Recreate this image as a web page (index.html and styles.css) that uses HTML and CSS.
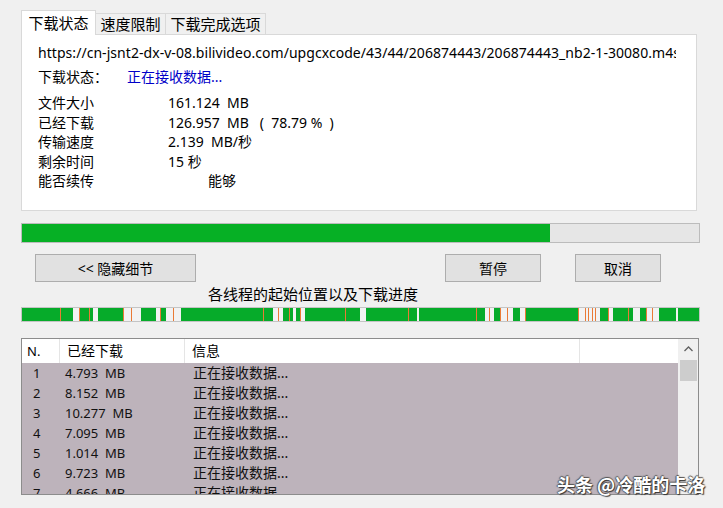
FILE: index.html
```html
<!DOCTYPE html>
<html lang="zh-CN">
<head>
    <meta charset="UTF-8">
    <title>下载状态</title>
    <link rel="stylesheet" href="styles.css">
</head>
<body>
    <div class="window">
        <!-- tabs -->
        <div class="tabs">
            <div class="tab active">下载状态</div>
            <div class="tab">速度限制</div>
            <div class="tab tab-wide">下载完成选项</div>
        </div>

        <div class="panel">
            <div class="url">https://cn-jsnt2-dx-v-08.bilivideo.com/upgcxcode/43/44/206874443/206874443_nb2-1-30080.m4s</div>
            <div class="status">
                <span class="status-label">下载状态：</span>
                <span class="status-value">正在接收数据...</span>
            </div>
            <div class="info">
                <span>文件大小</span><span class="val">161.124  MB</span>
                <span>已经下载</span><span class="val">126.957  MB   (  78.79 %  )</span>
                <span>传输速度</span><span class="val">2.139  MB/秒</span>
                <span>剩余时间</span><span class="val">15 秒</span>
                <span>能否续传</span><span class="val resume">能够</span>
            </div>
        </div>

        <div class="progress"><div class="progress-fill"></div></div>

        <div class="buttons">
            <button class="btn btn-hide">&lt;&lt; 隐藏细节</button>
            <button class="btn btn-pause">暂停</button>
            <button class="btn btn-cancel">取消</button>
        </div>

        <div class="threads-label">各线程的起始位置以及下载进度</div>
        <div class="threads" id="threads"></div>

        <!-- thread list -->
        <div class="list">
            <div class="list-main">
                <div class="list-head">
                    <span class="h-num">N.</span>
                    <span>已经下载</span>
                    <span>信息</span>
                    <span class="h-rest"></span>
                </div>
                <div class="rows">
                    <div class="row"><span class="num">1</span><span class="size">4.793  MB</span><span>正在接收数据...</span></div>
                    <div class="row"><span class="num">2</span><span class="size">8.152  MB</span><span>正在接收数据...</span></div>
                    <div class="row"><span class="num">3</span><span class="size">10.277  MB</span><span>正在接收数据...</span></div>
                    <div class="row"><span class="num">4</span><span class="size">7.095  MB</span><span>正在接收数据...</span></div>
                    <div class="row"><span class="num">5</span><span class="size">1.014  MB</span><span>正在接收数据...</span></div>
                    <div class="row"><span class="num">6</span><span class="size">9.723  MB</span><span>正在接收数据...</span></div>
                    <div class="row"><span class="num">7</span><span class="size">4.666  MB</span><span>正在接收数据...</span></div>
                </div>
            </div>
            <div class="scrollbar">
                <div class="scroll-up">
                    <svg width="9" height="6" viewBox="0 0 9 6"><polyline points="0.5,5 4.5,1 8.5,5" fill="none" stroke="#606060" stroke-width="1.3"/></svg>
                </div>
                <div class="scroll-thumb"></div>
            </div>
        </div>
    </div>

    <div class="watermark">头条 @冷酷的卡洛</div>

<script>
    // thread segments: type, start, end (px inside the bar)
    var segs = [
        ['g',0,38],['o',38,39],['g',39,51],['l',51,57],['o',57,58],['g',58,67],['o',67,68],['g',68,71],
        ['l',71,76],['g',76,101],['o',101,102],['l',102,109],['o',109,110],['l',110,119],['g',119,134],
        ['l',134,138],['o',138,139],['g',139,144],['l',144,151],['o',151,152],['l',152,159],['g',159,241],
        ['o',241,242],['g',242,251],['l',251,256],['o',256,257],['l',257,261],['g',261,267],['o',267,268],
        ['g',268,271],['l',271,274],['g',274,278],['o',278,279],['l',279,283],['g',283,323],['o',323,324],
        ['g',324,338],['l',338,344],['g',344,386],['o',386,387],['g',387,395],['l',395,397],['g',397,454],
        ['o',454,455],['g',455,463],['l',463,467],['o',467,468],['l',468,472],['g',472,478],['o',478,479],
        ['l',479,485],['o',485,486],['l',486,491],['g',491,498],['l',498,503],['o',503,504],['g',504,556],
        ['o',556,557],['l',557,563],['o',563,564],['l',564,566],['o',566,567],['l',567,570],['o',570,571],
        ['l',571,573],['o',573,574],['l',574,578],['g',578,586],['o',586,587],['l',587,591],['g',591,606],
        ['o',606,607],['g',607,611],['l',611,618],['g',618,624],['o',624,625],['l',625,630],['o',630,631],
        ['l',631,637],['g',637,654],['l',654,656],['g',656,677]
    ];
    var bar = document.getElementById('threads');
    segs.forEach(function(s) {
        var d = document.createElement('span');
        d.className = 'seg seg-' + s[0];
        d.style.width = (s[2] - s[1]) + 'px';
        bar.appendChild(d);
    });
</script>
</body>
</html>
```

FILE: styles.css
```css
body {
    margin: 0;
    background-color: #f0f0f0;
    color: #000;
    font-family: "Noto Sans", "Noto Sans CJK SC", sans-serif;
    font-size: 14px;
}
.window {
    width: 679px;
    padding: 10px 0 0 21px;
}
/* tabs */
.tabs {
    display: flex;
    align-items: flex-end;
    height: 24px;
}
.tab {
    box-sizing: border-box;
    width: 70px;
    height: 21px;
    border: 1px solid #d9d9d9;
    border-bottom: none;
    border-left: none;
    background-color: #f0f0f0;
    font-size: 15px;
    line-height: 20px;
    text-align: center;
}
.tab.active {
    width: 75px;
    height: 25px;
    margin-bottom: -1px;
    border-left: 1px solid #d9d9d9;
    background-color: #fff;
    line-height: 24px;
    position: relative;
    z-index: 1;
}
.tab-wide {
    width: 100px;
}
.panel {
    box-sizing: border-box;
    width: 676px;
    height: 177px;
    border: 1px solid #d9d9d9;
    background-color: #fff;
    padding: 8px 20px 0 16px;
}
.url {
    white-space: nowrap;
    overflow: hidden;
    line-height: 20px;
    letter-spacing: 0.05px;
}
.status {
    display: flex;
    margin-top: 4px;
    line-height: 20px;
}
.status-label {
    width: 89px;
}
.status-value {
    color: #0000c8;
}
.info {
    display: grid;
    grid-template-columns: 130px 1fr;
    margin-top: 6px;
    line-height: 19.5px;
}
.info span {
    white-space: pre;
}
.info .resume {
    padding-left: 40px;
}
/* main progress */
.progress {
    box-sizing: border-box;
    width: 679px;
    height: 20px;
    margin-top: 12px;
    border: 1px solid #bcbcbc;
    background-color: #e6e6e6;
}
.progress-fill {
    width: 78%;
    height: 100%;
    background-color: #06b025;
}
.buttons {
    display: flex;
    margin-top: 11px;
}
.btn {
    box-sizing: border-box;
    height: 28px;
    border: 1px solid #adadad;
    background-color: #e1e1e1;
    font-family: "Noto Sans", "Noto Sans CJK SC", sans-serif;
    font-size: 14px;
    color: #000;
    padding: 0;
}
.btn-hide {
    width: 161px;
    margin-left: 14px;
}
.btn-pause {
    width: 96px;
    margin-left: 249px;
}
.btn-cancel {
    width: 86px;
    margin-left: 34px;
}
.threads-label {
    margin: 2px 0 0 187px;
    font-size: 15px;
    line-height: 20px;
}
.threads {
    display: flex;
    box-sizing: border-box;
    width: 679px;
    height: 15px;
    margin-top: 3px;
    border: 1px solid #c4c4c4;
    background-color: #f2f2f2;
}
.seg {
    height: 100%;
    flex: none;
}
.seg-g { background-color: #06ab2a; }
.seg-l { background-color: #f2f2f2; }
.seg-o { background-color: #ea7a35; }
/* thread list */
.list {
    display: flex;
    box-sizing: border-box;
    width: 678px;
    height: 157px;
    margin-top: 16px;
    border: 1px solid #8c8c8c;
    background-color: #fff;
}
.list-main {
    width: 656px;
    overflow: hidden;
}
.list-head {
    display: grid;
    grid-template-columns: 38px 125px 395px 1fr;
    height: 24px;
    line-height: 24px;
    background-color: #fff;
}
.list-head span {
    border-right: 1px solid #e5e5e5;
    padding-left: 7px;
}
.list-head .h-num {
    padding-left: 5px;
    font-size: 13px;
}
.list-head .h-rest {
    border-right: none;
}
.rows {
    height: 131px;
    background-color: #bdb3bb;
    overflow: hidden;
}
.row {
    display: grid;
    grid-template-columns: 38px 125px 1fr;
    height: 20px;
    line-height: 20px;
    color: #111;
}
.row .num {
    padding-left: 11px;
    font-size: 13px;
}
.row .size {
    padding-left: 5px;
    font-size: 13px;
    white-space: pre;
}
.row span:last-child {
    padding-left: 8px;
}
.scrollbar {
    width: 20px;
    background-color: #f0f0f0;
}
.scroll-up {
    display: flex;
    justify-content: center;
    align-items: center;
    height: 20px;
}
.scroll-thumb {
    width: 17px;
    height: 21px;
    margin: 1px 0 0 2px;
    background-color: #cdcdcd;
}
/* watermark over the list */
.watermark {
    position: absolute;
    left: 557px;
    top: 471px;
    font-family: "Noto Sans CJK SC", sans-serif;
    font-size: 18px;
    font-weight: bold;
    color: #fff;
    text-shadow: 1px 1px 1px #333, -1px 0 1px #555, 0 -1px 1px #555;
}
```
